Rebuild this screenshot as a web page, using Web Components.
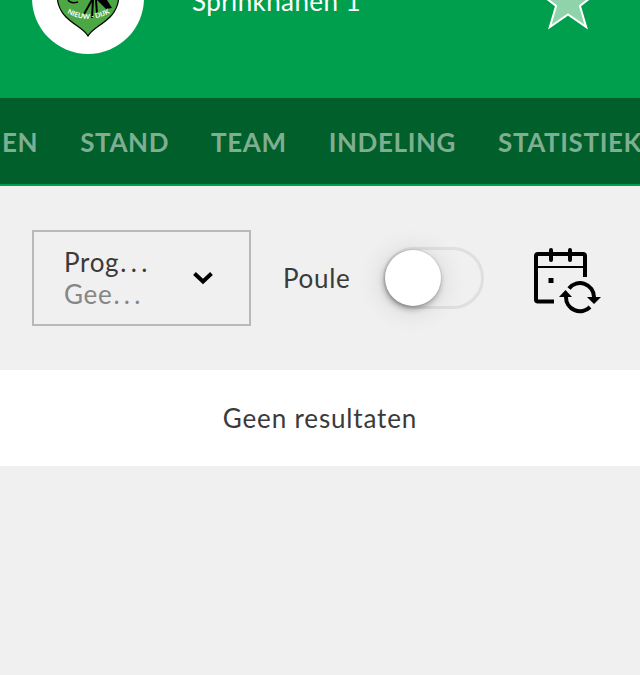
<!DOCTYPE html>
<html><head><meta charset="utf-8"><style>
html,body{margin:0;padding:0;height:675px;overflow:hidden;background:#f0f0f0;font-family:Lato,"Liberation Sans",sans-serif}
</style></head><body>
<team-header name="Sprinkhanen 1"></team-header>
<tab-bar><span>EN</span><span>STAND</span><span>TEAM</span><span>INDELING</span><span>STATISTIEK</span></tab-bar>
<filter-row></filter-row>
<empty-row>Geen resultaten</empty-row>
<script>
function def(name,html,init){customElements.define(name,class extends HTMLElement{constructor(){super();this.attachShadow({mode:'open'}).innerHTML=html}connectedCallback(){init&&init(this)}})}
def('team-header',`<style>
:host{display:flex;height:98px;background:#009f4d;overflow:hidden;color:#fff;box-sizing:border-box;padding-left:32px}
.logo{width:112px;height:112px;border-radius:50%;background:#fff;margin-top:-58px;flex:none;display:flex;align-items:center;justify-content:center}
.name{font-size:26px;line-height:28px;letter-spacing:.4px;margin:-13px 0 0 48px;flex:1;white-space:nowrap;font-weight:400}
.star{margin-right:30px;flex:none}
</style>
<div class="logo"><svg width="70" height="74" viewBox="0 0 70 74" style="margin-top:12px"><path d="M35 69C31 62 21 58 13 50C6 43 3 33 5 25C9 12 30 10 35 18C40 10 61 12 65 25C67 33 64 43 57 50C49 58 39 62 35 69Z" fill="#4ca744" stroke="#000" stroke-width="1.200"/><path d="M44 33L54 33L59 41L53 42Z" fill="#000"/><path d="M39 33L31 47M40 33L39 51M43 33L44 47" stroke="#000" stroke-width="2" fill="none"/><path d="M15 33Q18 37 25 35" stroke="#000" stroke-width="1.500" fill="none"/><path id="arc" d="M14 46Q35 58 57 46" fill="none"/><text font-family="Lato,sans-serif" font-size="7" font-weight="700" fill="#fff" text-anchor="middle"><textPath href="#arc" startOffset="50%">NIEUW - DIJK</textPath></text></svg></div>
<div class="name"><slot></slot></div>
<svg class="star" width="80" height="32" viewBox="530 0 80 32"><path d="M568 -29L575.300 -8.100L597.500 -7.600L579.900 5.900L586.200 27.100L568 14.500L549.800 27.100L556.100 5.900L538.500 -7.600L560.700 -8.100Z" fill="#8fd3ab" stroke="#fff" stroke-width="2"/></svg>`,h=>{h.textContent=h.getAttribute('name')});
def('tab-bar',`<style>
:host{display:block;height:86px;background:#005f2a;border-bottom:2px solid #009f4d;overflow:hidden}
.t{display:flex;gap:42px;height:86px;align-items:center;margin-left:2px;padding-top:2px;box-sizing:border-box;white-space:nowrap;color:#7fae91;font:700 26px/1 Lato,sans-serif;letter-spacing:.6px}
::slotted(span){flex:none}
</style><div class="t"><slot></slot></div>`);
def('filter-row',`<style>
:host{display:flex;height:184px;align-items:center;padding-left:32px;box-sizing:border-box;color:#3a3a3a;letter-spacing:.7px}
.sel{box-sizing:border-box;width:219px;height:96px;border:2px solid #b9b9b9;display:flex;align-items:center;padding-left:30px;font-size:26px;line-height:32px;flex:none}
.sel div{flex:1}
.sub{color:#868686}
i{font-style:normal;letter-spacing:4.300px;margin-left:1px}
.chev{margin-right:35px}
.lab{font-size:26px;margin-left:32px}
.sw{position:relative;width:101px;height:62px;box-sizing:border-box;border:3px solid #dfdfdf;border-radius:31px;margin-left:32px;flex:none}
.k{position:absolute;left:-1px;top:0;width:56px;height:56px;border-radius:50%;background:#fff;box-shadow:-1px 3px 6px rgba(0,0,0,.35),0 0 0 1px rgba(0,0,0,.06),-1px 3px 20px 10px rgba(0,0,0,.055)}
.cal{margin-left:46px;flex:none}
</style>
<div class="sel"><div>Prog<i>...</i><br><span class="sub">Gee<i>...</i></span></div>
<svg class="chev" width="22" height="14" viewBox="0 0 22 14"><path d="M2.500 2.500L11 10.500L19.500 2.500" fill="none" stroke="#000" stroke-width="4"/></svg></div>
<span class="lab">Poule</span>
<div class="sw"><div class="k"></div></div>
<svg class="cal" width="72" height="74" viewBox="530 241 72 74" fill="none" stroke="#000"><path d="M554 301.500H538Q536 301.500 536 299.500V256Q536 254 538 254H583Q585 254 585 256V277" stroke-width="4"/><path d="M536 267H585" stroke-width="2"/><path d="M551 250V260M570 250V260" stroke-width="4" stroke-linecap="round"/><rect x="548.500" y="278" width="5" height="5" fill="#000" stroke="none"/><path d="M569 288.400A14 14 0 0 1 594 297" stroke-width="4"/><path d="M566 297A14 14 0 0 0 590 307" stroke-width="4"/><path d="M559 297H572L565.500 290ZM587 297H601L594 304Z" fill="#000" stroke="none"/></svg>`);
def('empty-row',`<style>
:host{display:flex;height:96px;background:#fff;align-items:center;justify-content:center;font-size:26px;letter-spacing:.85px;color:#3a3a3a}
</style><slot></slot>`);
</script>
</body></html>
